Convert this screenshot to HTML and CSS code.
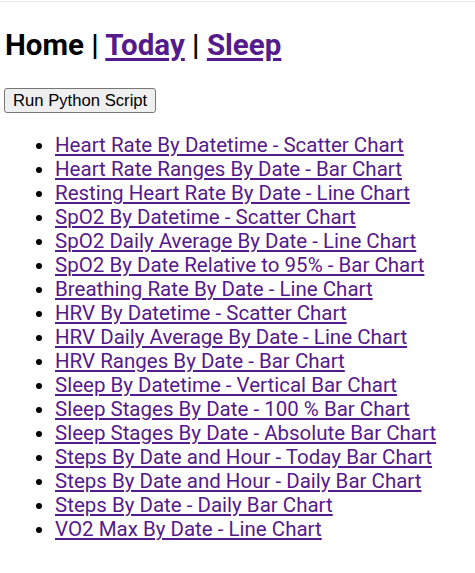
FILE: index.html
```html
<!DOCTYPE html>
<html>
<head>
<meta charset="utf-8">
<title>Home</title>
<link rel="stylesheet" href="styles.css">
</head>
<body>
<h2 class="nav">Home | <a href="#">Today</a> | <a href="#">Sleep</a></h2>
<button class="run-btn">Run Python Script</button>
<ul class="charts">
  <li><a href="#">Heart Rate By Datetime - Scatter Chart</a></li>
  <li><a href="#">Heart Rate Ranges By Date - Bar Chart</a></li>
  <li><a href="#">Resting Heart Rate By Date - Line Chart</a></li>
  <li><a href="#">SpO2 By Datetime - Scatter Chart</a></li>
  <li><a href="#">SpO2 Daily Average By Date - Line Chart</a></li>
  <li><a href="#">SpO2 By Date Relative to 95% - Bar Chart</a></li>
  <li><a href="#">Breathing Rate By Date - Line Chart</a></li>
  <li><a href="#">HRV By Datetime - Scatter Chart</a></li>
  <li><a href="#">HRV Daily Average By Date - Line Chart</a></li>
  <li><a href="#">HRV Ranges By Date - Bar Chart</a></li>
  <li><a href="#">Sleep By Datetime - Vertical Bar Chart</a></li>
  <li><a href="#">Sleep Stages By Date - 100 % Bar Chart</a></li>
  <li><a href="#">Sleep Stages By Date - Absolute Bar Chart</a></li>
  <li><a href="#">Steps By Date and Hour - Today Bar Chart</a></li>
  <li><a href="#">Steps By Date and Hour - Daily Bar Chart</a></li>
  <li><a href="#">Steps By Date - Daily Bar Chart</a></li>
  <li><a href="#">VO2 Max By Date - Line Chart</a></li>
</ul>
</body>
</html>
```
FILE: styles.css
```css
html {
  background: #fff;
}
body {
  margin: 1px 0 0 0;
  border-top: 1px solid #e6e6e6;
  padding: 0 0 0 5px;
  font-family: Roboto, "Noto Sans", sans-serif;
  color: #000;
}
a {
  color: #551a8b;
  text-decoration: underline;
  text-decoration-thickness: 2px;
  text-underline-offset: 2px;
}
.nav {
  margin: 25px 0 0 0;
  font-size: 29.5px;
  line-height: 36px;
  font-weight: 700;
}
.nav a {
  text-decoration-thickness: 3px;
  text-underline-offset: 3px;
}
.run-btn {
  display: block;
  margin: 25px 0 0 -1px;
  height: 25px;
  padding: 0 8px;
  font-family: Arial, "Liberation Sans", sans-serif;
  font-size: 16.67px;
  color: #000;
  background: #efefef;
  border: 1px solid #767676;
  border-radius: 3px;
}
.charts {
  margin: 20px 0 0 0;
  padding: 0 0 0 50px;
  font-size: 20.5px;
  line-height: 24px;
}
.charts li {
  white-space: nowrap;
}
```
